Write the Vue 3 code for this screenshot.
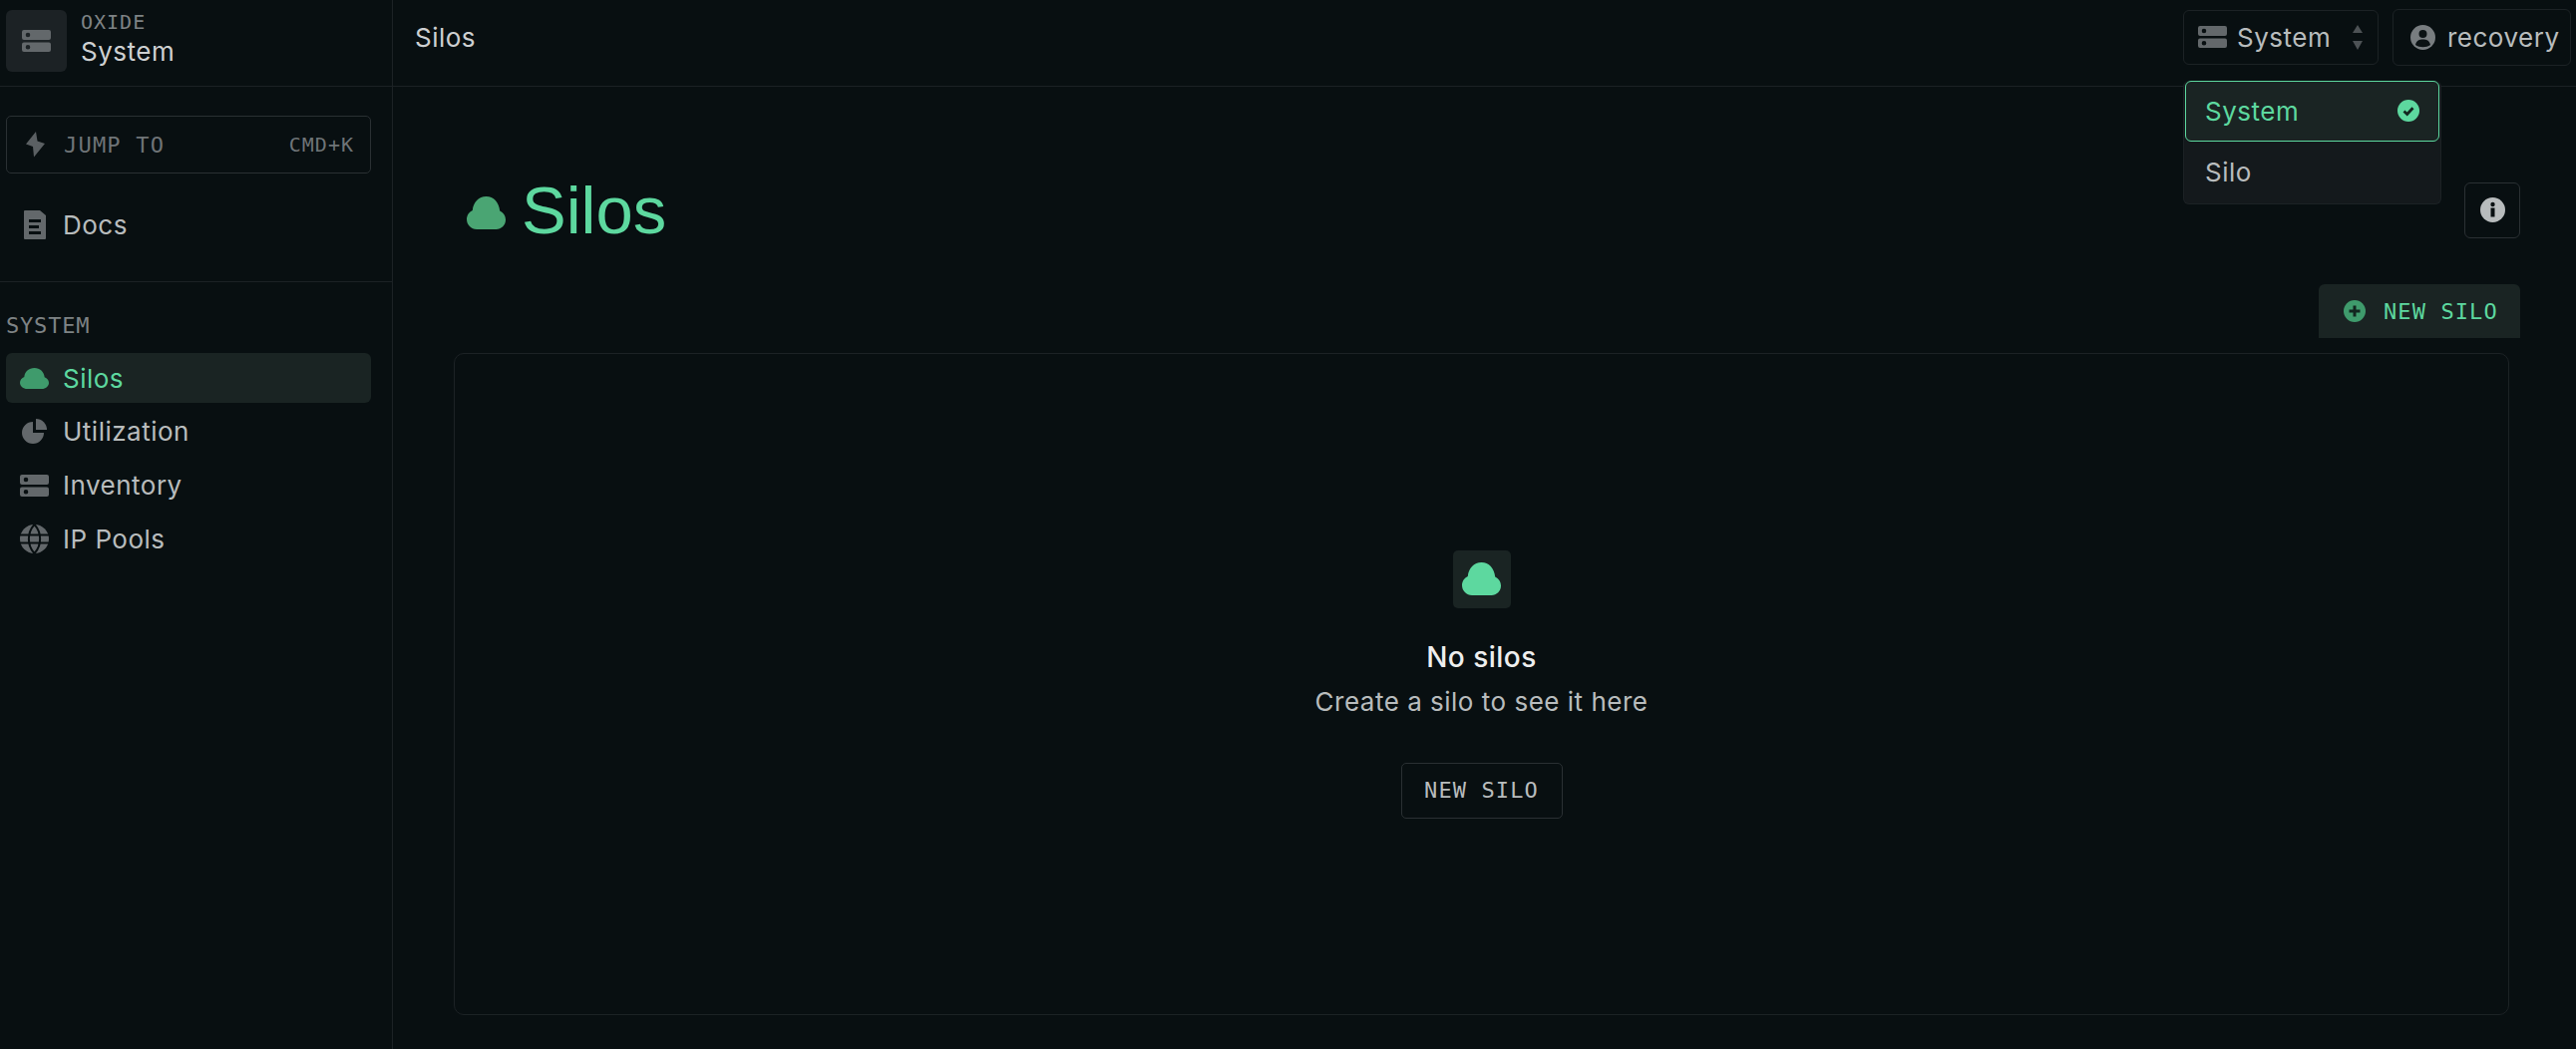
<script setup>
const cloud = 'M10 33C4.5 33 0 28.5 0 23C0 19 2.4 15.6 5.8 14C6.5 6 12 0 19.5 0C27 0 32.4 6 33.2 14.5C36.6 16 39 19.4 39 23.5C39 28.7 34.7 33 29.5 33Z'
const server = 'M2 0H27A2 2 0 0 1 29 2V8A2 2 0 0 1 27 10H2A2 2 0 0 1 0 8V2A2 2 0 0 1 2 0ZM6 2.7A2.3 2.3 0 1 0 6 7.3A2.3 2.3 0 1 0 6 2.7ZM2 12.5H27A2 2 0 0 1 29 14.5V20A2 2 0 0 1 27 22H2A2 2 0 0 1 0 20V14.5A2 2 0 0 1 2 12.5ZM6 15A2.3 2.3 0 1 0 6 19.6A2.3 2.3 0 1 0 6 15Z'

const navItems = [
  { label: 'Silos', icon: 'cloud', active: true },
  { label: 'Utilization', icon: 'pie' },
  { label: 'Inventory', icon: 'server' },
  { label: 'IP Pools', icon: 'globe' },
]
</script>

<template>
  <div class="layout">
    <aside class="sidebar">
      <div class="brand">
        <div class="brand-tile">
          <svg width="29" height="22" viewBox="0 0 29 22"><path :d="server" fill="#63686b" fill-rule="evenodd" /></svg>
        </div>
        <div class="brand-text">
          <div class="brand-org">OXIDE</div>
          <div class="brand-name">System</div>
        </div>
      </div>

      <div class="section section-top">
        <div class="jump">
          <svg width="19" height="26" viewBox="0 0 19 26"><path d="M10 0L0 12.5L7 15L8 25.500L19 12L11.500 9.500Z" fill="#5b6063" /></svg>
          <span class="jump-label">JUMP TO</span>
          <span class="jump-key">CMD+K</span>
        </div>
        <div class="nav-row docs">
          <span class="nav-icon">
            <svg width="22" height="29" viewBox="0 0 22 29">
              <path d="M1 0H16L22 5V28A1 1 0 0 1 21 29H1A1 1 0 0 1 0 28V1A1 1 0 0 1 1 0ZM5 9V12H17V9ZM5 15V18H15V15ZM5 21V24H17V21Z" fill="#63686b" fill-rule="evenodd" />
            </svg>
          </span>
          Docs
        </div>
      </div>

      <div class="section section-nav">
        <div class="section-title">SYSTEM</div>
        <div
          v-for="item in navItems"
          :key="item.label"
          class="nav-row"
          :class="{ active: item.active }"
        >
          <span class="nav-icon">
            <svg v-if="item.icon === 'cloud'" width="29" height="21" viewBox="0 0 39 33" preserveAspectRatio="none"><path :d="cloud" fill="#3f9b6c" /></svg>
            <svg v-else-if="item.icon === 'pie'" width="25" height="25" viewBox="0 0 25 25">
              <path d="M11 3V14H22A11 11 0 1 1 11 3Z" fill="#63686b" />
              <path d="M14 0A11 11 0 0 1 25 11H14Z" fill="#63686b" />
            </svg>
            <svg v-else-if="item.icon === 'server'" width="29" height="22" viewBox="0 0 29 22"><path :d="server" fill="#63686b" fill-rule="evenodd" /></svg>
            <svg v-else width="29" height="29" viewBox="0 0 29 29">
              <circle cx="14.500" cy="14.500" r="14.500" fill="#63686b" />
              <path d="M0 10.500H29M0 18.500H29M14.500 0C7 8 7 21 14.500 29C22 21 22 8 14.500 0" fill="none" stroke="#080f11" stroke-width="2" />
            </svg>
          </span>
          {{ item.label }}
        </div>
      </div>
    </aside>

    <div class="main">
      <header class="topbar">
        <div class="crumb">Silos</div>
        <div class="picker">
          <div class="picker-button">
            <svg width="29" height="22" viewBox="0 0 29 22"><path :d="server" fill="#63686b" fill-rule="evenodd" /></svg>
            <span class="picker-label">System</span>
            <svg width="12" height="25" viewBox="0 0 12 25">
              <path d="M6 0L11 8H1Z M6 25L1 16H11Z" fill="#4d5255" />
            </svg>
          </div>
          <div class="menu">
            <div class="menu-item selected">
              System
              <svg width="22" height="22" viewBox="0 0 22 22">
                <circle cx="11" cy="11" r="11" fill="#5dd89f" />
                <path d="M6.500 11.500L9.700 14.500L15.500 8.200" fill="none" stroke="#12261f" stroke-width="2.800" />
              </svg>
            </div>
            <div class="menu-item">Silo</div>
          </div>
        </div>
        <div class="user-button">
          <svg width="25" height="25" viewBox="0 0 25 25">
            <circle cx="12.500" cy="12.500" r="12.500" fill="#787d80" />
            <circle cx="12.500" cy="9" r="4" fill="#0b1214" />
            <path d="M5 20C6 15.500 9 14.500 12.500 14.500C16 14.500 19 15.500 20 20C16 23 9 23 5 20Z" fill="#0b1214" />
          </svg>
          recovery
        </div>
      </header>

      <main class="content">
        <div class="page-header">
          <h1 class="page-title">
            <svg width="39" height="33" viewBox="0 0 39 33"><path :d="cloud" fill="#4aa573" /></svg>
            Silos
          </h1>
          <button class="info-button" type="button">
            <svg width="25" height="25" viewBox="0 0 25 25">
              <circle cx="12.500" cy="12.500" r="12.500" fill="#b8bcbd" />
              <rect x="10.500" y="10.500" width="4" height="9" fill="#080f11" />
              <circle cx="12.500" cy="7" r="2.200" fill="#080f11" />
            </svg>
          </button>
        </div>

        <div class="actions">
          <button class="new-button" type="button">
            <svg width="22" height="22" viewBox="0 0 22 22">
              <circle cx="11" cy="11" r="11" fill="#3f9b6c" />
              <path d="M11 5.500V16.500M5.500 11H16.500" stroke="#12261f" stroke-width="3" />
            </svg>
            NEW SILO
          </button>
        </div>

        <section class="card">
          <div class="empty-tile">
            <svg width="39" height="33" viewBox="0 0 39 33"><path :d="cloud" fill="#5dd89f" /></svg>
          </div>
          <div class="empty-title">No silos</div>
          <div class="empty-text">Create a silo to see it here</div>
          <button class="empty-button" type="button">NEW SILO</button>
        </section>
      </main>
    </div>
  </div>
</template>

<style>
html, body {
  margin: 0;
  background: #080f11;
  overflow: hidden;
}
</style>

<style scoped>
.layout {
  display: flex;
  height: 1052px;
  background: #080f11;
  color: #b8bcbd;
  font-family: Inter, "Noto Sans", sans-serif;
  font-size: 26px;
  letter-spacing: 0.5px;
  box-sizing: border-box;
}

svg {
  flex: none;
}

.sidebar {
  width: 394px;
  flex: none;
  box-sizing: border-box;
  border-right: 1px solid #1c2225;
}

.brand {
  display: flex;
  align-items: center;
  gap: 14px;
  height: 87px;
  box-sizing: border-box;
  padding: 0 6px 4px;
  border-bottom: 1px solid #1c2225;
}

.brand-tile {
  width: 61px;
  height: 62px;
  display: flex;
  align-items: center;
  justify-content: center;
  background: #1c2225;
  border-radius: 6px;
}

.brand-text {
  margin-top: -3px;
}

.brand-org {
  font-family: "DejaVu Sans Mono", monospace;
  font-size: 20px;
  line-height: 24px;
  letter-spacing: 1px;
  color: #7e8385;
  margin: -2px 0 2px;
}

.brand-name {
  line-height: 32px;
  color: #ced0d1;
}

.section {
  padding: 0 21px 0 6px;
}

.section-top {
  padding-top: 29px;
  height: 196px;
  box-sizing: border-box;
  border-bottom: 1px solid #1c2225;
}

.jump {
  display: flex;
  align-items: center;
  height: 58px;
  box-sizing: border-box;
  padding: 0 16px 0 19px;
  border: 1px solid #2a3033;
  border-radius: 5px;
  font-family: "DejaVu Sans Mono", monospace;
  font-size: 22px;
  letter-spacing: 1.200px;
  color: #6f7477;
  margin-bottom: 26px;
}

.jump-label {
  margin-left: 19px;
}

.jump-key {
  margin-left: auto;
  font-size: 20px;
  letter-spacing: 1px;
}

.section-nav {
  padding-top: 32px;
}

.section-title {
  font-family: "DejaVu Sans Mono", monospace;
  font-size: 22px;
  line-height: 24px;
  letter-spacing: 0.800px;
  color: #7e8385;
  margin-bottom: 15px;
}

.nav-row {
  display: flex;
  align-items: center;
  gap: 14px;
  height: 50px;
  padding: 0 14px;
  margin-bottom: 3.800px;
  border-radius: 6px;
  color: #b8bcbd;
}

.nav-row.docs {
  margin-bottom: 0;
}

.nav-row.active {
  background: #1a2423;
  color: #5dd89f;
}

.nav-icon {
  width: 29px;
  display: flex;
  align-items: center;
  justify-content: center;
}

.main {
  flex: 1;
  min-width: 0;
  display: flex;
  flex-direction: column;
}

.topbar {
  display: flex;
  align-items: center;
  height: 87px;
  flex: none;
  box-sizing: border-box;
  padding: 0 5px 12px 22px;
  border-bottom: 1px solid #1c2225;
}

.crumb {
  margin-right: auto;
  color: #ced0d1;
}

.picker {
  position: relative;
  margin-right: 14px;
}

.picker-button {
  display: flex;
  align-items: center;
  width: 196px;
  height: 55px;
  box-sizing: border-box;
  padding: 0 14px 0 14px;
  border: 1px solid #1c2225;
  border-radius: 6px;
}

.picker-label {
  margin: 0 auto 0 10px;
}

.menu {
  position: absolute;
  top: 71px;
  left: 0;
  width: 259px;
  box-sizing: border-box;
  padding: 0 1px;
  background: #14191c;
  border: 1px solid #1c2225;
  border-top: none;
  border-radius: 6px;
}

.menu-item {
  display: flex;
  align-items: center;
  justify-content: space-between;
  height: 62px;
  box-sizing: border-box;
  padding: 0 20px;
}

.menu-item.selected {
  height: 61px;
  background: #1a2423;
  color: #5dd89f;
  border: 1px solid #5dd89f;
  border-radius: 6px;
  padding: 0 19px;
}

.user-button {
  display: flex;
  align-items: center;
  gap: 12px;
  width: 179px;
  height: 57px;
  box-sizing: border-box;
  padding: 0 10px 0 17px;
  border: 1px solid #1c2225;
  border-radius: 6px;
}

.content {
  flex: 1;
  min-height: 0;
  display: flex;
  flex-direction: column;
  padding: 96px 56px 34px 61px;
}

.page-header {
  display: flex;
  align-items: center;
  justify-content: space-between;
  margin-left: 13px;
}

.page-title {
  display: flex;
  align-items: center;
  gap: 16px;
  margin: -1px 0 1px;
  font-family: "Liberation Sans", Arial, sans-serif;
  font-size: 67px;
  font-weight: 400;
  letter-spacing: 0;
  color: #5dd89f;
  line-height: 57px;
}

.page-title svg {
  margin-top: 5px;
}

.info-button {
  width: 56px;
  height: 56px;
  display: flex;
  align-items: center;
  justify-content: center;
  padding: 0;
  margin: -1px 0 1px;
  background: none;
  border: 1px solid #2a3033;
  border-radius: 6px;
}

.actions {
  display: flex;
  justify-content: flex-end;
  margin-top: 45px;
}

.new-button {
  display: flex;
  align-items: center;
  gap: 18px;
  width: 202px;
  height: 54px;
  padding: 0 0 0 25px;
  background: #1a2423;
  border: none;
  border-radius: 6px 6px 0 0;
  color: #5dd89f;
  font-family: "DejaVu Sans Mono", monospace;
  font-size: 22px;
  letter-spacing: 1.100px;
}

.card {
  flex: 1;
  min-height: 0;
  display: flex;
  flex-direction: column;
  align-items: center;
  justify-content: center;
  margin: 15px 11px 0 0;
  border: 1px solid #1c2225;
  border-radius: 10px;
}

.empty-tile {
  width: 58px;
  height: 58px;
  display: flex;
  align-items: center;
  justify-content: center;
  background: #1a2423;
  border-radius: 5px;
}

.empty-title {
  margin-top: 31px;
  font-size: 28px;
  line-height: 36px;
  font-weight: 500;
  color: #eeeeee;
}

.empty-text {
  margin-top: 9px;
  line-height: 36px;
  color: #b8bcbd;
}

.empty-button {
  margin-top: 43px;
  width: 162px;
  height: 56px;
  padding: 0;
  background: none;
  border: 1px solid #2a3033;
  border-radius: 5px;
  color: #b8bcbd;
  font-family: "DejaVu Sans Mono", monospace;
  font-size: 22px;
  letter-spacing: 1.100px;
}
</style>
